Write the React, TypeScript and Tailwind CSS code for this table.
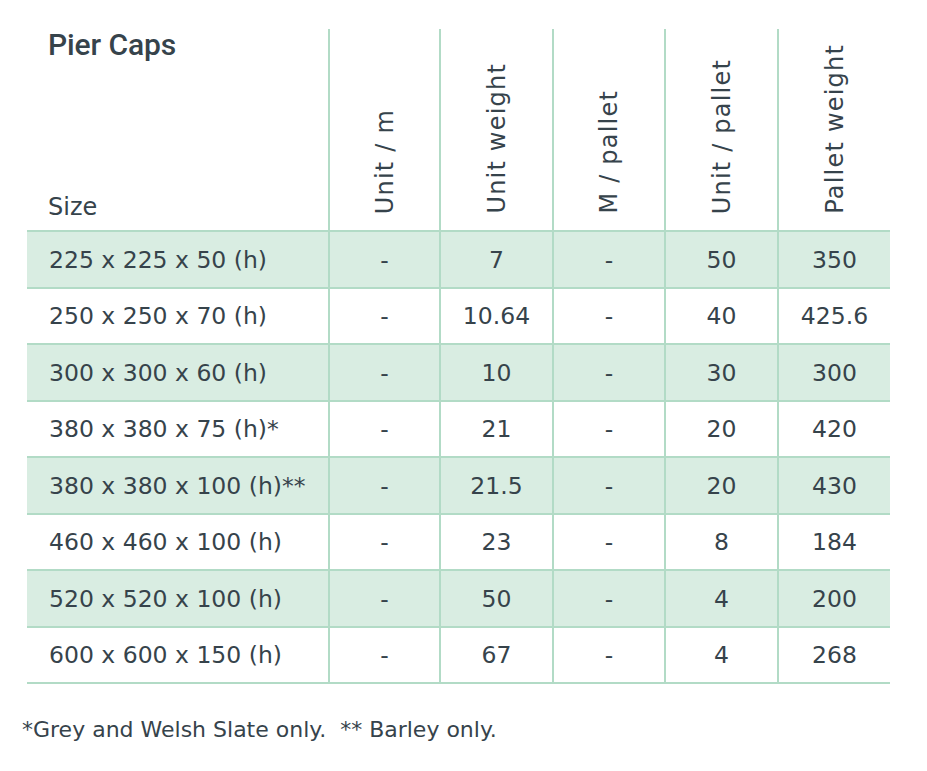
const rows = [
  { size: '225 x 225 x 50 (h)', unitM: '-', unitWeight: '7', mPallet: '-', unitPallet: '50', palletWeight: '350' },
  { size: '250 x 250 x 70 (h)', unitM: '-', unitWeight: '10.64', mPallet: '-', unitPallet: '40', palletWeight: '425.6' },
  { size: '300 x 300 x 60 (h)', unitM: '-', unitWeight: '10', mPallet: '-', unitPallet: '30', palletWeight: '300' },
  { size: '380 x 380 x 75 (h)*', unitM: '-', unitWeight: '21', mPallet: '-', unitPallet: '20', palletWeight: '420' },
  { size: '380 x 380 x 100 (h)**', unitM: '-', unitWeight: '21.5', mPallet: '-', unitPallet: '20', palletWeight: '430' },
  { size: '460 x 460 x 100 (h)', unitM: '-', unitWeight: '23', mPallet: '-', unitPallet: '8', palletWeight: '184' },
  { size: '520 x 520 x 100 (h)', unitM: '-', unitWeight: '50', mPallet: '-', unitPallet: '4', palletWeight: '200' },
  { size: '600 x 600 x 150 (h)', unitM: '-', unitWeight: '67', mPallet: '-', unitPallet: '4', palletWeight: '268' },
];

const headers = ['Unit / m', 'Unit weight', 'M / pallet', 'Unit / pallet', 'Pallet weight'];

const grid = 'grid grid-cols-[301px_111px_113px_112px_113px_113px]';

export default function App() {
  return (
    <div className="min-h-screen bg-white pl-[27px] pt-[29px] text-[#36434b] font-['DejaVu_Sans',sans-serif]">
      <div className="w-[863px]">
        {/* Header */}
        <div className={`${grid} h-[203px] border-b-2 border-[#b2dbc6]`}>
          <div className="flex flex-col justify-between pl-[21px] pb-[11px]">
            <h2 className="font-['Roboto',sans-serif] font-medium text-[30px] leading-none tracking-[-0.1px] mt-[1px]">
              Pier Caps
            </h2>
            <span className="text-[24px] leading-none">Size</span>
          </div>
          {headers.map((h) => (
            <div key={h} className="flex items-end justify-center border-l-2 border-[#b2dbc6] pb-[16px]">
              <span className="[writing-mode:vertical-rl] rotate-180 text-[24px] tracking-[1.2px] leading-none whitespace-nowrap">
                {h}
              </span>
            </div>
          ))}
        </div>

        {/* Body */}
        {rows.map((r, i) => (
          <div
            key={r.size}
            className={`${grid} h-[56.5px] border-b-2 border-[#b2dbc6] text-[23.5px] ${i % 2 === 0 ? 'bg-[#d9ede2]' : 'bg-white'}`}
          >
            <div className="flex items-center pl-[22px] pt-[2px]">{r.size}</div>
            {[r.unitM, r.unitWeight, r.mPallet, r.unitPallet, r.palletWeight].map((v, j) => (
              <div key={j} className="flex items-center justify-center border-l-2 border-[#b2dbc6] pt-[2px]">
                {v}
              </div>
            ))}
          </div>
        ))}
      </div>

      <p className="mt-[29px] -ml-[5px] text-[22px]">*Grey and Welsh Slate only.&nbsp; ** Barley only.</p>
    </div>
  );
}
